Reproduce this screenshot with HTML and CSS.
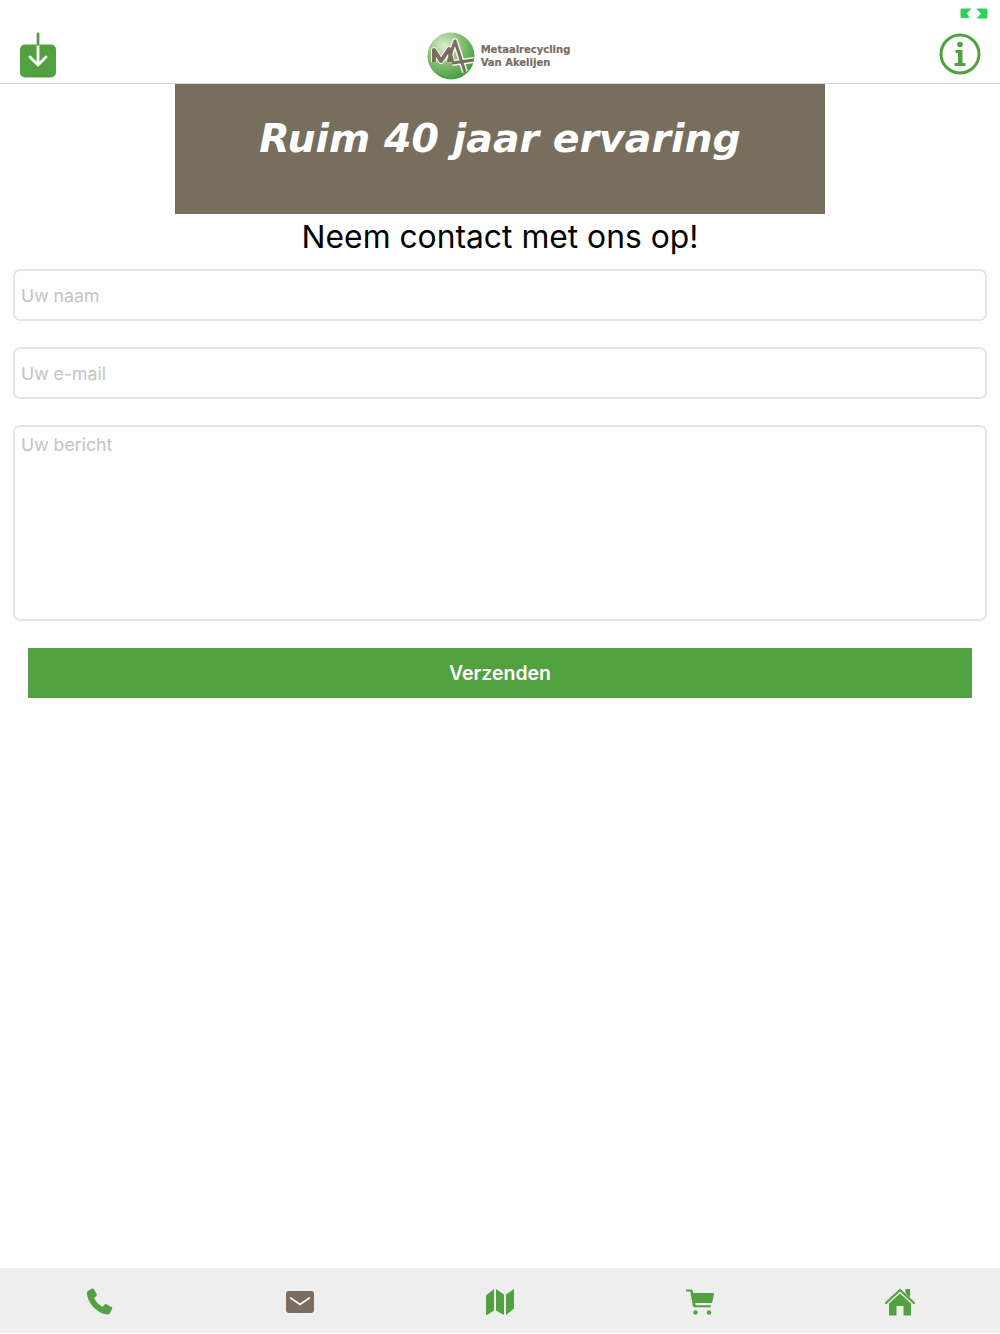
FILE: index.html
```html
<!DOCTYPE html>
<html lang="nl">
<head>
<meta charset="utf-8">
<title>Contact</title>
<link rel="stylesheet" href="styles.css">
</head>
<body>
<div class="page">
  <div class="status">
    <svg class="link-icon" viewBox="0 0 28 11" width="28" height="11"><path fill="#2ed15c" d="M2 0.5h9.500L7 5.200l2.500 4.800H2a1.500 1.500 0 0 1-1.500-1.500v-7A1.500 1.500 0 0 1 2 .5zM16.500 .5H26a1.500 1.500 0 0 1 1.500 1.500v7a1.500 1.500 0 0 1-1.500 1.500h-9.500l4.500-4.800z"/></svg>
  </div>
  <header class="topbar">
    <svg class="ic-download" viewBox="0 0 36 46" width="36" height="46">
      <path fill="#52a141" d="M5 12.500h26a5 5 0 0 1 5 5v23a5 5 0 0 1-5 5H5a5 5 0 0 1-5-5v-23a5 5 0 0 1 5-5z"/>
      <path fill="none" stroke="#fff" stroke-width="2.800" stroke-linecap="round" stroke-linejoin="round" d="M18 12v20M10 25l8 8 8-8"/>
      <path fill="none" stroke="#52a141" stroke-width="2.800" stroke-linecap="round" d="M18 2v10.500"/>
    </svg>
    <div class="logo">
      <svg class="logo-mark" viewBox="0 0 48 48" width="48" height="48">
        <defs><radialGradient id="g" cx="35%" cy="28%" r="78%"><stop offset="0" stop-color="#dcecd2"/><stop offset=".5" stop-color="#84c070"/><stop offset="1" stop-color="#3f9a3d"/></radialGradient></defs>
        <circle cx="24" cy="24" r="23.500" fill="url(#g)"/>
        <path fill="none" stroke="#f2f2ee" stroke-width="6" stroke-linejoin="round" d="M7 30V18l7 11 8-12 3 13M21 30l7-21 10 31M25 31l22-3"/>
        <path fill="none" stroke="#7a6d5f" stroke-width="4" stroke-linejoin="round" d="M7 30V18l7 11 8-12 3 13"/>
        <path fill="none" stroke="#7a6d5f" stroke-width="3" stroke-linejoin="round" d="M21 30l7-21 10 31M25 31l22-3"/>
      </svg>
      <div class="logo-text"><span>Metaalrecycling</span><span>Van Akelijen</span></div>
    </div>
    <svg class="ic-info" viewBox="0 0 42 42" width="42" height="42">
      <circle cx="21" cy="21" r="19" fill="none" stroke="#52a141" stroke-width="3"/>
      <circle cx="21" cy="11.500" r="2.800" fill="#52a141"/>
      <path fill="#52a141" d="M16.500 17h7v13h3v3h-11v-3h3.500V20h-2.500z"/>
    </svg>
  </header>
  <main class="content">
    <div class="banner"><h1>Ruim 40 jaar ervaring</h1></div>
    <h2 class="title">Neem contact met ons op!</h2>
    <form class="form">
      <input class="field" type="text" placeholder="Uw naam">
      <input class="field" type="email" placeholder="Uw e-mail">
      <textarea class="field area" placeholder="Uw bericht"></textarea>
      <button class="send" type="button">Verzenden</button>
    </form>
  </main>
  <nav class="tabs">
    <a class="tab"><svg viewBox="0 0 28 28" width="28" height="28"><path fill="#52a141" d="M2.200 2.800 6 .6c.8-.4 1.600-.2 2 .6l2.700 4.900c.3.700.2 1.400-.4 1.900L8.100 10c1.700 3.900 4.900 7.100 8.600 8.900l1.900-2.300c.5-.6 1.300-.7 1.900-.4l5 2.900c.7.400.9 1.200.6 1.900l-2.200 4c-.6 1.100-1.800 1.700-3 1.500C11.200 25.200 2.300 15.800.9 6.200c-.2-1.300.2-2.600 1.300-3.400z"/></svg></a>
    <a class="tab"><svg viewBox="0 0 28 22" width="28" height="22"><rect width="28" height="22" rx="3" fill="#7a6d5f"/><path fill="none" stroke="#fff" stroke-width="1.600" d="M4 6.500l10 7 10-7"/></svg></a>
    <a class="tab"><svg viewBox="0 0 28 28" width="28" height="28"><path fill="#52a141" d="M0 7.500 8 1v21.500L1 27c-.5.300-1 0-1-.6zM10 1l8 5.500V27l-8-4.500zM20 6.500 28 1v19.500l-8 6.500z"/></svg></a>
    <a class="tab"><svg viewBox="0 0 28 26" width="28" height="26"><path fill="#52a141" d="M0 .5h5.500c.6 0 1 .3 1.100.9l.5 2.600H27c.7 0 1.100.6 1 1.300l-1.800 8c-.1.500-.5.800-1 .8H9.200l.4 2.200h15.200v2H8c-.5 0-.9-.3-1-.8L4.300 2.500H0z"/><circle cx="9.500" cy="23.500" r="2.200" fill="#52a141"/><circle cx="23" cy="23.500" r="2.200" fill="#52a141"/></svg></a>
    <a class="tab"><svg viewBox="0 0 30 28" width="30" height="28"><path fill="none" stroke="#52a141" stroke-width="2.200" stroke-linecap="round" d="M1 15 15 2l14 13"/><path fill="#52a141" d="M20.500 1H25v8.500l-4.500-4.200zM15 5.500 26 15.500V27.500H18.500V18h-7v9.500H4V15.500z"/></svg></a>
  </nav>
</div>
</body>
</html>
```
FILE: styles.css
```css
* { box-sizing: border-box; }
html, body { margin: 0; padding: 0; background: #fff; }
body { font-family: Inter, "Liberation Sans", sans-serif; }
.page { width: 1000px; height: 1334px; display: flex; flex-direction: column; position: relative; }
.status { height: 0; display: flex; justify-content: flex-end; }
.link-icon { display: block; margin: 8px 12px 0 0; flex: none; }
.topbar { height: 84px; flex: none; border-bottom: 1px solid #d2d2d2; display: flex; align-items: flex-end; justify-content: space-between; padding: 0 19px 5px 20px; }
.ic-download { display: block; }
.ic-info { display: block; margin-bottom: 3px; }
.logo { display: flex; align-items: center; gap: 6px; margin: 0 0 -2px 2px; }
.logo-mark { display: block; }
.logo-text { display: flex; flex-direction: column; font-family: "DejaVu Sans", sans-serif; font-weight: 700; font-size: 10px; line-height: 13px; color: #7a6d5f; -webkit-text-stroke: 0.2px #7a6d5f; margin-top: -1px; }
.content { flex: 1; display: flex; flex-direction: column; align-items: center; }
.banner { width: 650px; height: 130px; flex: none; background: #786e5e; display: flex; justify-content: center; padding-top: 29px; }
.banner h1 { margin: 0; font-family: "DejaVu Sans", sans-serif; font-style: italic; font-weight: 700; font-size: 39.500px; line-height: 50px; color: #fff; }
.title { margin: 0; height: 55px; font-weight: 400; font-size: 31.800px; line-height: 45px; color: #000; text-align: center; }
.form { width: 100%; display: flex; flex-direction: column; gap: 26px; padding: 0 13px; align-items: center; }
.field { display: block; width: 100%; height: 52px; border: 2px solid #e6e6e6; border-radius: 7px; background: #fff; padding: 0 6px; font-family: Inter, sans-serif; font-size: 17.700px; color: #000; outline: none; resize: none; }
.field::placeholder { color: #c4c4c6; opacity: 1; }
.area { height: 196px; padding-top: 6px; line-height: 24px; }
.send { width: 944px; height: 50px; margin-top: 1px; border: 0; background: #52a141; color: #fff; font-family: Inter, sans-serif; font-weight: 600; font-size: 19.500px; }
.tabs { height: 65px; flex: none; margin-bottom: 1px; background: #eeeeee; display: grid; grid-template-columns: repeat(5, 1fr); }
.tab { display: flex; align-items: center; justify-content: center; padding-top: 2px; }
.tab svg { display: block; }
```
